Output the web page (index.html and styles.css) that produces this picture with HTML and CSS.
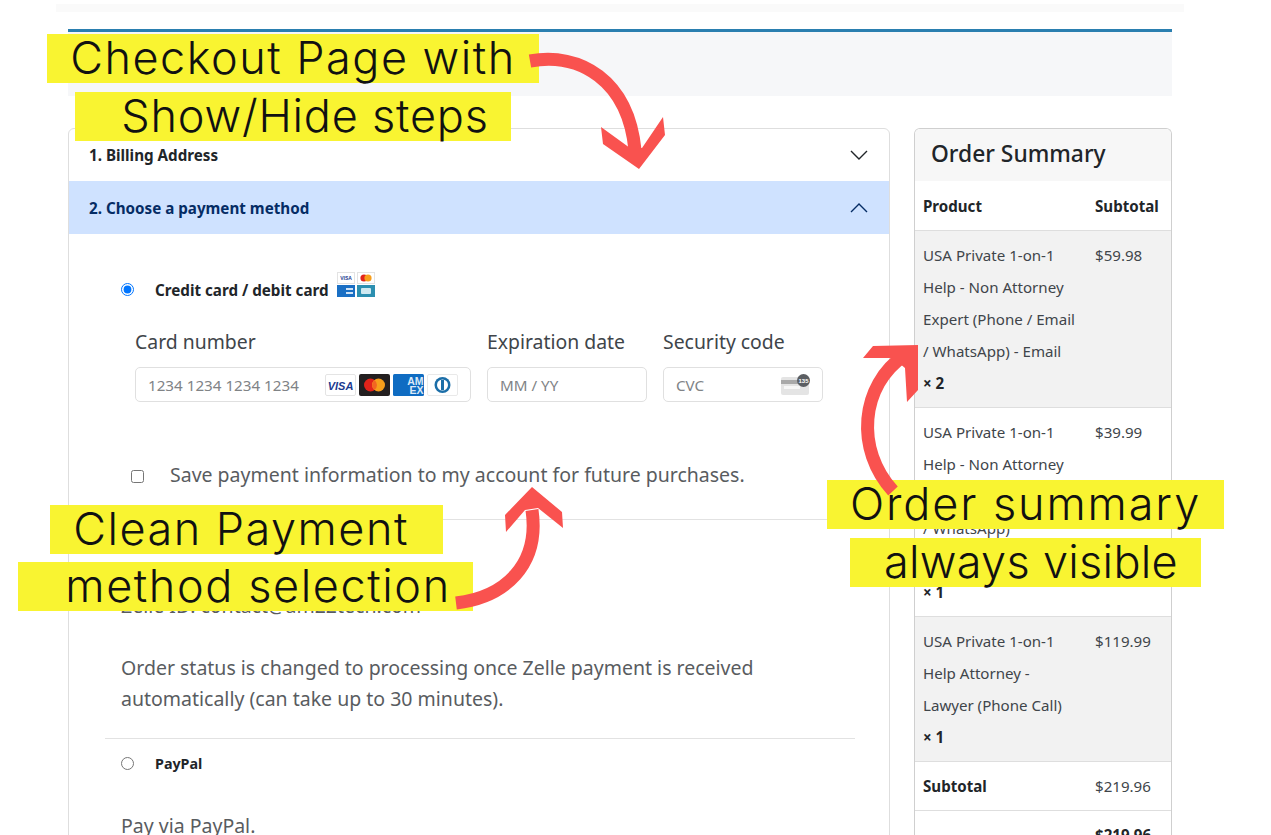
FILE: index.html
```html
<!DOCTYPE html>
<html lang="en">
<head>
    <meta charset="UTF-8">
    <meta name="viewport" content="width=device-width, initial-scale=1.0">
    <title>Checkout</title>
    <link rel="stylesheet" href="styles.css">
</head>
<body>
    <div class="top-strip"></div>
    <div class="container">
        <div class="banner"></div>
        <div class="columns">
            <div class="steps">
                <div class="step-head">
                    <span>1. Billing Address</span>
                    <svg class="chevron" viewBox="0 0 18 10"><path d="M1 1l8 8 8-8"/></svg>
                </div>
                <div class="step-head step-open">
                    <span>2. Choose a payment method</span>
                    <svg class="chevron" viewBox="0 0 18 10"><path d="M1 9l8-8 8 8"/></svg>
                </div>
                <div class="step-body">
                    <div class="method method-card">
                        <input type="radio" name="pay" checked>
                        <b>Credit card / debit card</b>
                        <svg class="mini-cards" viewBox="0 0 38 25">
                            <rect x="0.5" y="0.5" width="17" height="11" fill="#fff" stroke="#e3e3e3"/>
                            <text x="9" y="8" text-anchor="middle" class="mini-visa">VISA</text>
                            <rect x="20.5" y="0.5" width="17" height="11" fill="#fff" stroke="#e3e3e3"/>
                            <circle cx="27" cy="6" r="3.6" fill="#e2231a"/>
                            <circle cx="31" cy="6" r="3.6" fill="#f79e1b"/>
                            <rect y="13" width="18" height="12" fill="#1a6fc4"/>
                            <path d="M9 16h7v2H9zM9 20h7v2H9z" fill="#cfe2f5"/>
                            <rect x="20" y="13" width="18" height="12" fill="#2c8fb0"/>
                            <rect x="24" y="16" width="10" height="6" rx="1" fill="#cfe9f1"/>
                        </svg>
                    </div>
                    <div class="card-fields">
                        <div class="field field-number">
                            <label>Card number</label>
                            <div class="fake-input">
                                <span>1234 1234 1234 1234</span>
                                <div class="brands">
                                    <svg viewBox="0 0 31 22"><rect x="0.5" y="0.5" width="30" height="21" rx="1.5" fill="#fff" stroke="#e4e4e4"/><text x="15.5" y="15.5" text-anchor="middle" class="brand-visa">VISA</text></svg>
                                    <svg viewBox="0 0 31 22"><rect width="31" height="22" rx="2" fill="#231f20"/><circle cx="11.5" cy="11" r="6.5" fill="#e2231a"/><circle cx="19.5" cy="11" r="6.5" fill="#f79e1b"/><path d="M15.5 5.900a6.500 6.500 0 0 1 0 10.200a6.500 6.500 0 0 1 0-10.200z" fill="#f26522"/></svg>
                                    <svg viewBox="0 0 31 22"><rect width="31" height="22" rx="1.5" fill="#0f6cc2"/><text x="30.5" y="10.5" text-anchor="end" class="brand-amex">AM</text><text x="30.5" y="20" text-anchor="end" class="brand-amex">EX</text></svg>
                                    <svg viewBox="0 0 31 22"><rect x="0.5" y="0.5" width="30" height="21" rx="1.5" fill="#fff" stroke="#e9e9e9"/><circle cx="15.5" cy="11" r="8" fill="#1b6ea8"/><circle cx="15.5" cy="11" r="5.5" fill="#fff"/><rect x="14" y="6" width="3" height="10" fill="#1b6ea8"/></svg>
                                </div>
                            </div>
                        </div>
                        <div class="field field-small">
                            <label>Expiration date</label>
                            <div class="fake-input"><span>MM / YY</span></div>
                        </div>
                        <div class="field field-small">
                            <label>Security code</label>
                            <div class="fake-input">
                                <span>CVC</span>
                                <svg class="cvc-icon" viewBox="0 0 31 22">
                                    <rect x="1" y="3" width="28" height="18" rx="2" fill="#e4e4e4"/>
                                    <rect x="1" y="6" width="28" height="4" fill="#a9a9a9"/>
                                    <rect x="4" y="12" width="16" height="3" fill="#f7f7f7"/>
                                    <circle cx="23.5" cy="6.5" r="6.5" fill="#5b5e62"/>
                                    <text x="23.5" y="8.700" text-anchor="middle" class="cvc-num">135</text>
                                </svg>
                            </div>
                        </div>
                    </div>
                    <div class="save-row">
                        <input type="checkbox">
                        <span>Save payment information to my account for future purchases.</span>
                    </div>
                    <hr class="divider save-divider">
                    <div class="method method-after">
                        <input type="radio" name="pay">
                        <b>Zelle</b>
                    </div>
                    <p class="method-text zelle-id">Zelle ID: contact@am22tech.com</p>
                    <p class="method-text zelle-note">Order status is changed to processing once Zelle payment is received<br>automatically (can take up to 30 minutes).</p>
                    <hr class="divider paypal-divider">
                    <div class="method method-after">
                        <input type="radio" name="pay">
                        <b>PayPal</b>
                    </div>
                    <p class="method-text paypal-note">Pay via PayPal.</p>
                </div>
            </div>

            <div class="summary">
                <h2>Order Summary</h2>
                <table>
                    <thead>
                        <tr><th class="col-product">Product</th><th>Subtotal</th></tr>
                    </thead>
                    <tbody>
                        <tr class="shaded">
                            <td>USA Private 1-on-1<br>Help - Non Attorney<br>Expert (Phone / Email<br>/ WhatsApp) - Email<br><b>× 2</b></td>
                            <td>$59.98</td>
                        </tr>
                        <tr>
                            <td>USA Private 1-on-1<br>Help - Non Attorney<br>Expert (Phone / Email<br>/ WhatsApp)<br>- Phone Call<br><b>× 1</b></td>
                            <td>$39.99</td>
                        </tr>
                        <tr class="shaded">
                            <td>USA Private 1-on-1<br>Help Attorney -<br>Lawyer (Phone Call)<br><b>× 1</b></td>
                            <td>$119.99</td>
                        </tr>
                        <tr>
                            <td><b>Subtotal</b></td>
                            <td>$219.96</td>
                        </tr>
                        <tr>
                            <td class="total-label"><b>Total</b></td>
                            <td><b>$219.96</b></td>
                        </tr>
                    </tbody>
                </table>
            </div>
        </div>
    </div>

    <!-- annotations pasted over the screenshot -->
    <svg class="arrows" viewBox="0 0 1271 835">
        <path class="arrow-line" d="M530 61C580 52 628 80 635 150"/>
        <path class="arrow-head" d="M639 169L603 144L601 127L630 148L642 148L663 117L665 135Z"/>
        <path class="arrow-line" d="M456 603C505 597 540 565 532 510"/>
        <path class="arrow-head" d="M532 487L562 512L563 528L538 508L525 510L506 532L505 515Z"/>
        <path class="arrow-line" d="M893 491C855 450 860 385 905 355"/>
        <path class="arrow-head" d="M873 346L918 345L918 390L907 402L905 368L893 358L863 358Z"/>
    </svg>
    <div class="note note-a">Checkout Page with</div>
    <div class="note note-b">Show/Hide steps</div>
    <div class="note note-c">Clean Payment</div>
    <div class="note note-d">method selection</div>
    <div class="note note-e">Order summary</div>
    <div class="note note-f">always visible</div>
</body>
</html>
```

FILE: styles.css
```css
html, body {
    margin: 0;
    padding: 0;
    height: 100vh;
    overflow: hidden;
}
body {
    position: relative;
    background: #fff;
    font-family: "Noto Sans", "Open Sans", sans-serif;
    color: #212529;
}
.top-strip {
    height: 8px;
    margin: 4px 87px 0 56px;
    background: #fafafa;
}
.container {
    width: 1104px;
    margin: 17px 0 0 68px;
}
.banner {
    height: 64px;
    border-top: 3px solid #2a7fb0;
    background: #f6f7f9;
}
.columns {
    display: flex;
    gap: 24px;
    margin-top: 32px;
    align-items: flex-start;
}

/* left column */
.steps {
    width: 820px;
    border: 1px solid #dedede;
    border-radius: 6px 6px 0 0;
    flex: none;
}
.step-head {
    display: flex;
    justify-content: space-between;
    align-items: center;
    height: 52px;
    padding: 0 21px 0 20px;
    font-size: 15.2px;
    font-weight: 700;
    color: #212529;
}
.step-open {
    height: 53px;
    background: #cfe2ff;
    color: #052c65;
}
.chevron {
    width: 18px;
    height: 10px;
    fill: none;
    stroke: #212529;
    stroke-width: 1.4;
}
.step-open .chevron {
    stroke: #052c65;
}
.step-body {
    padding: 38px 34px 0 36px;
}
.method {
    display: flex;
    align-items: center;
    height: 26px;
    padding-left: 16px;
    font-size: 14.3px;
}
.method input {
    width: 13px;
    height: 13px;
    margin: 0 21px 0 0;
}
.method b {
    color: #212529;
}
.method-card {
    align-items: flex-end;
    height: 28px;
    font-size: 15.2px;
}
.method-card b {
    line-height: 20px;
}
.method-card input {
    margin-bottom: 4px;
}
.method-after {
    margin-top: 11px;
}
.mini-cards {
    align-self: flex-start;
    width: 38px;
    height: 25px;
    margin-left: 8px;
}
.mini-visa {
    font: 700 5px "Liberation Sans", sans-serif;
    fill: #1a3a8f;
}
.card-fields {
    display: flex;
    gap: 16px;
    margin: 28px 0 0 30px;
}
.field label {
    display: block;
    height: 28px;
    line-height: 28px;
    margin-bottom: 11px;
    font-size: 19.4px;
    color: #40454a;
}
.field-number {
    width: 336px;
}
.field-small {
    width: 160px;
}
.fake-input {
    display: flex;
    justify-content: space-between;
    align-items: center;
    box-sizing: border-box;
    height: 35px;
    padding: 0 12px;
    border: 1px solid #e0e0e0;
    border-radius: 5px;
    font-size: 15.2px;
    color: #808386;
}
.brands {
    display: flex;
    gap: 3px;
}
.brands svg {
    width: 31px;
    height: 22px;
}
.brand-visa {
    font: italic 700 11px "Liberation Sans", sans-serif;
    fill: #1a3a8f;
}
.brand-amex {
    font: 700 10.5px "Liberation Sans", sans-serif;
    fill: #dce9f7;
}
.cvc-icon {
    width: 31px;
    height: 22px;
    margin-right: -1px;
}
.cvc-num {
    font: 700 6px "Liberation Sans", sans-serif;
    fill: #fff;
}
.save-row {
    display: flex;
    align-items: center;
    gap: 26px;
    height: 31px;
    margin: 58px 0 0 26px;
    font-size: 19.5px;
    color: #595c5f;
}
.save-row span {
    margin-top: -2px;
}
.save-row input {
    width: 13px;
    height: 13px;
    margin: 2px 0 0 0;
}
.divider {
    margin: 0;
    border: 0;
    border-top: 1px solid #e2e2e2;
}
.save-divider {
    margin-top: 28px;
}
.paypal-divider {
    margin-top: 24px;
}
.method-text {
    margin: 0;
    padding-left: 16px;
    font-size: 19.5px;
    line-height: 31px;
    color: #595c5f;
}
.zelle-id {
    margin-top: 33px;
}
.zelle-note {
    margin-top: 31px;
}
.paypal-note {
    margin-top: 34px;
}

/* right column */
.summary {
    width: 256px;
    border: 1px solid #cfcfcf;
    border-bottom: 0;
    border-radius: 6px 6px 0 0;
    flex: none;
    overflow: hidden;
}
.summary h2 {
    margin: 0;
    height: 52px;
    line-height: 49px;
    padding-left: 16px;
    background: #f7f7f7;
    font-size: 22.8px;
    font-weight: 500;
    color: #212529;
}
.summary table {
    width: 256px;
    table-layout: fixed;
    border-collapse: separate;
    border-spacing: 0;
    font-size: 15.1px;
    line-height: 32px;
}
.summary th,
.summary td {
    padding: 8px;
    text-align: left;
    vertical-align: top;
    border-bottom: 1px solid #dedede;
}
.summary th {
    height: 32px;
    padding: 9px 8px 8px;
    font-weight: 700;
}
.col-product {
    width: 156px;
}
.summary td {
    color: #40454a;
}
.summary td b {
    color: #212529;
}
.shaded td {
    background: #f2f2f2;
}
.summary .total-label {
    padding-top: 32px;
}

/* yellow callouts */
.note {
    position: absolute;
    display: flex;
    justify-content: center;
    align-items: center;
    box-sizing: border-box;
    height: 49px;
    padding-bottom: 3px;
    background: #f9f431;
    font-family: Inter, "Open Sans", sans-serif;
    font-size: 45px;
    font-weight: 300;
    color: #111;
    white-space: nowrap;
}
.note-a { left: 47px; top: 34px; width: 492px; letter-spacing: 1.5px; }
.note-b { left: 75px; top: 92px; width: 436px; letter-spacing: 0.8px; padding-left: 24px; }
.note-c { left: 50px; top: 505px; width: 393px; letter-spacing: 1.5px; padding-right: 11px; }
.note-d { left: 18px; top: 562px; width: 455px; letter-spacing: 1.6px; padding-left: 25px; }
.note-e { left: 827px; top: 480px; width: 397px; letter-spacing: 1.9px; }
.note-f { left: 850px; top: 538px; width: 351px; letter-spacing: 0.3px; padding-left: 11px; }

.arrows {
    position: absolute;
    left: 0;
    top: 0;
    width: 1271px;
    height: 835px;
    z-index: 1;
    pointer-events: none;
}
.arrow-line {
    fill: none;
    stroke: #f9524f;
    stroke-width: 13;
}
.arrow-head {
    fill: #f9524f;
}
```
